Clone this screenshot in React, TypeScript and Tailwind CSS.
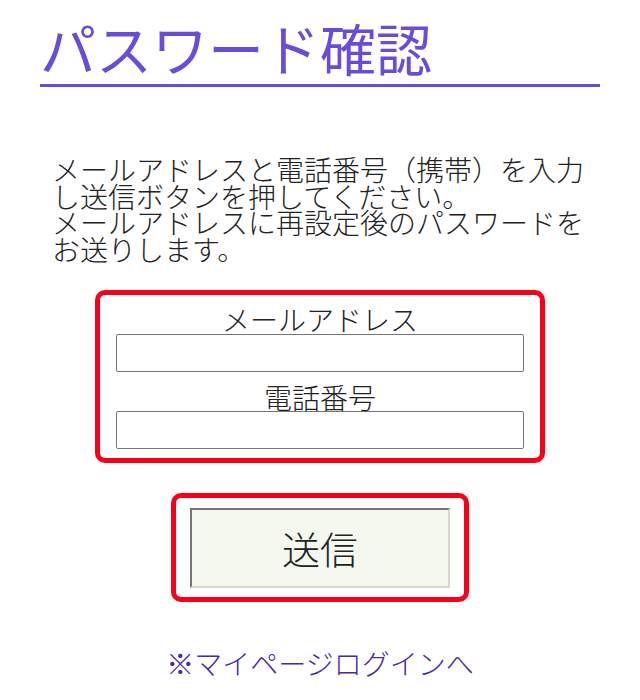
export default function App() {
  return (
    <div
      className="min-h-[700px] bg-white px-10 font-light"
      style={{ fontFamily: '"Noto Sans CJK JP", "Noto Sans", sans-serif' }}
    >
      <h1 className="pt-[19px] pb-[9px] border-b-[3px] border-[#6a4cd6] text-[56px] leading-none text-[#6a4cd6] font-normal">
        パスワード確認
      </h1>

      <p className="mt-[69px] px-3 text-[28px] leading-[26.5px] text-[#222]">
        メールアドレスと電話番号（携帯）を入力し送信ボタンを押してください。
        <br />
        メールアドレスに再設定後のパスワードをお送りします。
      </p>

      {/* form box */}
      <div className="mx-auto mt-[28px] w-[450px] rounded-[10px] border-[5px] border-[#f8001a] px-4 pt-[10px] pb-[9px]">
        <label className="block text-center text-[28px] leading-none text-[#222] mb-[1px]">
          メールアドレス
        </label>
        <input
          type="text"
          className="block h-[38px] w-full rounded-[2px] border border-[#767676] bg-white"
        />
        <label className="mt-[11px] block text-center text-[28px] leading-none text-[#222]">
          電話番号
        </label>
        <input
          type="tel"
          className="block h-[38px] w-full rounded-[2px] border border-[#767676] bg-white"
        />
      </div>

      {/* submit */}
      <div className="mx-auto mt-[30px] w-[298px] rounded-[10px] border-[5px] border-[#f8001a] px-[14px] pt-[10px] pb-[9px]">
        <button className="h-[80px] w-[260px] border-2 border-t-[#767676] border-l-[#767676] border-b-[#d8d8cc] border-r-[#d8d8cc] bg-[#f5f8ee] text-[38px] leading-none text-[#222]">
          送信
        </button>
      </div>

      <div className="mt-[47px] text-center">
        <a href="#" className="text-[28px] leading-none text-[#4a2aa0]">
          ※マイページログインへ
        </a>
      </div>
    </div>
  );
}
